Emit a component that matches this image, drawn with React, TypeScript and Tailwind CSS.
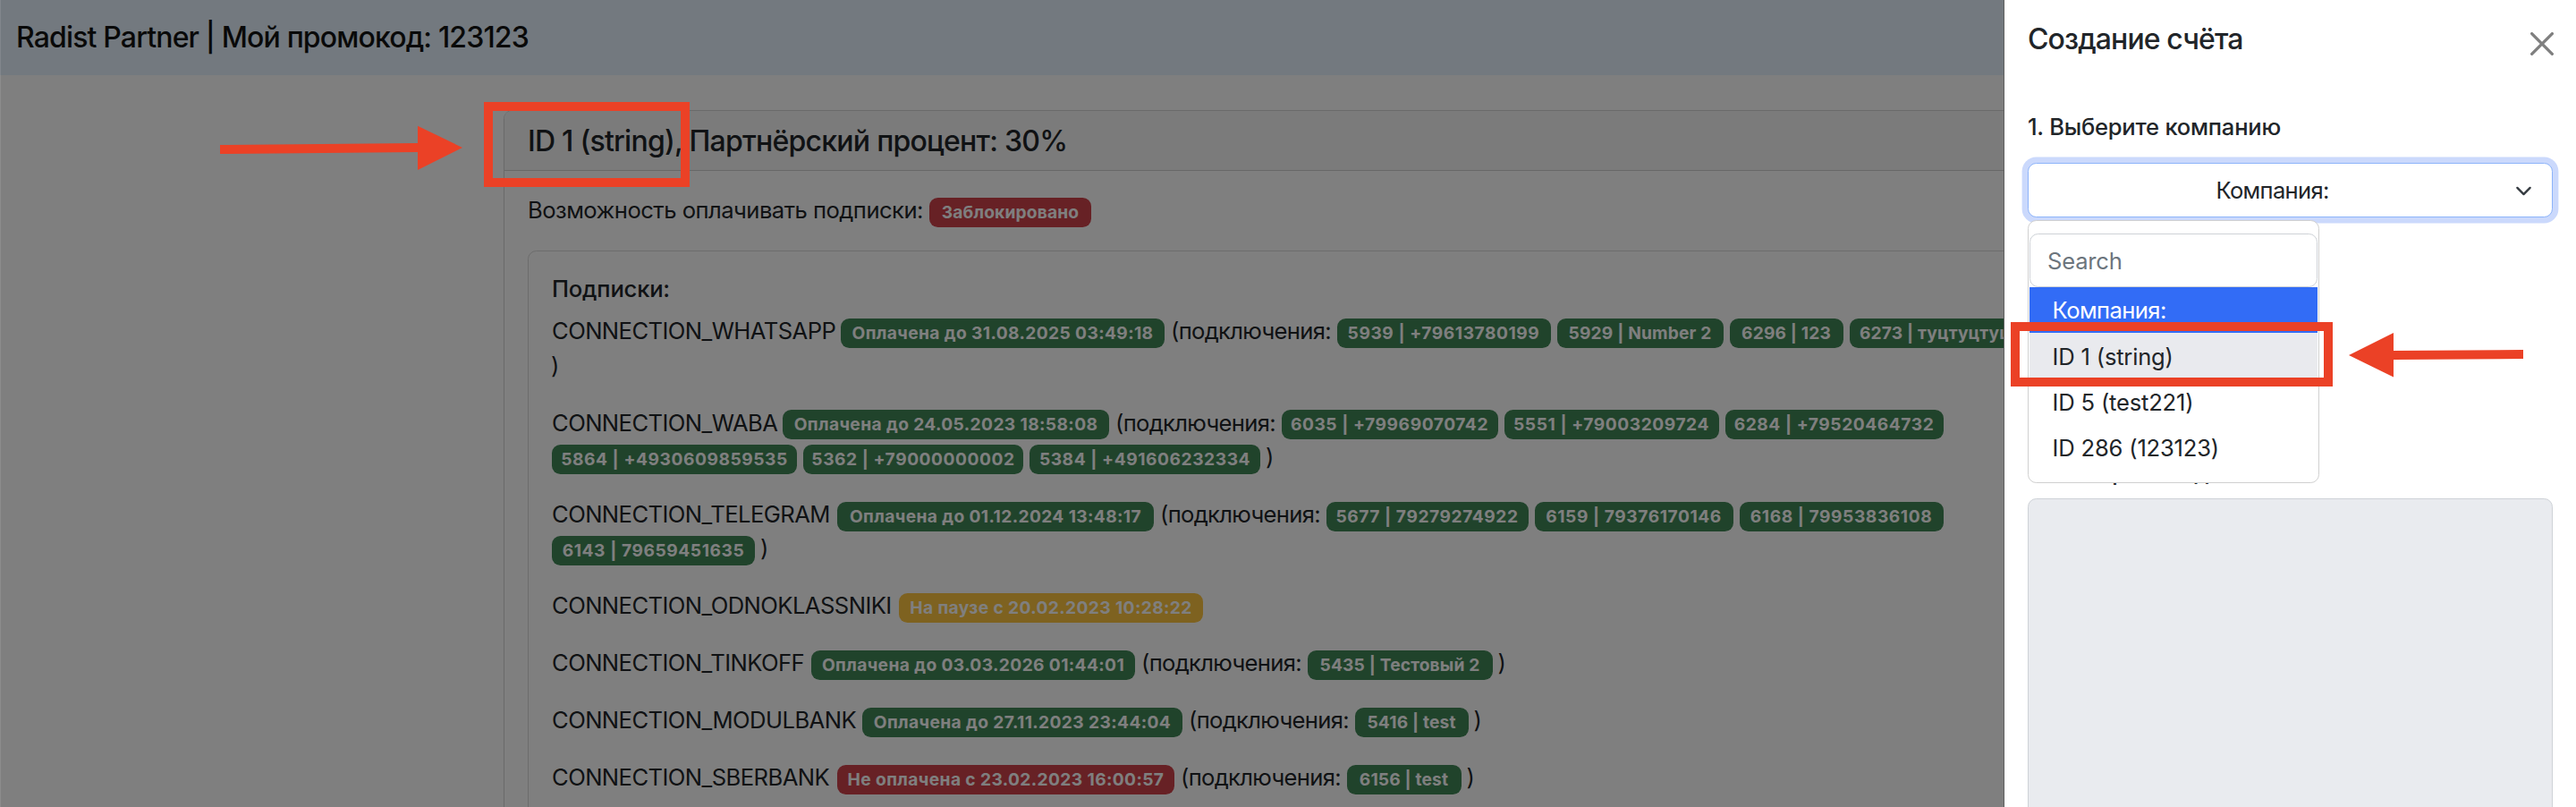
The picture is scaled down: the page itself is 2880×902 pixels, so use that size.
import clsx from "clsx";

type Tone = "success" | "danger" | "warning";

const tones: Record<Tone, string> = {
  success: "bg-[#408656]",
  danger: "bg-[#ce424a]",
  warning: "bg-[#fcc440]",
};

const subscriptions: {
  name: string;
  nameWidth: string;
  tone: Tone;
  status: string;
  statusWidth: string;
  connections: { label: string; width: string }[];
}[] = [
  {
    name: "CONNECTION_WHATSAPP",
    nameWidth: "w-[316px]",
    tone: "success",
    status: "Оплачена до 31.08.2025 03:49:18",
    statusWidth: "w-[362px]",
    connections: [
      { label: "5939 | +79613780199", width: "w-[239px]" },
      { label: "5929 | Number 2", width: "w-[186px]" },
      { label: "6296 | 123", width: "w-[127px]" },
      { label: "6273 | туцтуцтуц", width: "w-[192px]" },
    ],
  },
  {
    name: "CONNECTION_WABA",
    nameWidth: "w-[251px]",
    tone: "success",
    status: "Оплачена до 24.05.2023 18:58:08",
    statusWidth: "w-[365px]",
    connections: [
      { label: "6035 | +79969070742", width: "w-[242px]" },
      { label: "5551 | +79003209724", width: "w-[240px]" },
      { label: "6284 | +79520464732", width: "w-[244px]" },
      { label: "5864 | +4930609859535", width: "w-[274px]" },
      { label: "5362 | +79000000002", width: "w-[246px]" },
      { label: "5384 | +491606232334", width: "w-[258px]" },
    ],
  },
  {
    name: "CONNECTION_TELEGRAM",
    nameWidth: "w-[312px]",
    tone: "success",
    status: "Оплачена до 01.12.2024 13:48:17",
    statusWidth: "w-[354px]",
    connections: [
      { label: "5677 | 79279274922", width: "w-[226px]" },
      { label: "6159 | 79376170146", width: "w-[222px]" },
      { label: "6168 | 79953836108", width: "w-[228px]" },
      { label: "6143 | 79659451635", width: "w-[227px]" },
    ],
  },
  {
    name: "CONNECTION_ODNOKLASSNIKI",
    nameWidth: "w-[381px]",
    tone: "warning",
    status: "На паузе с 20.02.2023 10:28:22",
    statusWidth: "w-[340px]",
    connections: [],
  },
  {
    name: "CONNECTION_TINKOFF",
    nameWidth: "w-[283px]",
    tone: "success",
    status: "Оплачена до 03.03.2026 01:44:01",
    statusWidth: "w-[362px]",
    connections: [{ label: "5435 | Тестовый 2", width: "w-[207px]" }],
  },
  {
    name: "CONNECTION_MODULBANK",
    nameWidth: "w-[340px]",
    tone: "success",
    status: "Оплачена до 27.11.2023 23:44:04",
    statusWidth: "w-[358px]",
    connections: [{ label: "5416 | test", width: "w-[127px]" }],
  },
  {
    name: "CONNECTION_SBERBANK",
    nameWidth: "w-[312px]",
    tone: "danger",
    status: "Не оплачена с 23.02.2023 16:00:57",
    statusWidth: "w-[377px]",
    connections: [{ label: "6156 | test", width: "w-[128px]" }],
  },
];

const companies = ["Компания:", "ID 1 (string)", "ID 5 (test221)", "ID 286 (123123)"];

function Badge({ tone, width, children }: { tone: Tone; width: string; children: string }) {
  // long numbers get a bit more air between digits
  const isPhone = /\| \+?\d{5,}/.test(children);

  return (
    <span
      className={clsx(
        "flex h-[33px] shrink-0 items-center justify-center rounded-[9.6px] text-[19.2px] font-bold leading-none whitespace-nowrap text-white",
        isPhone ? "tracking-[0.55px]" : children.length > 20 ? "tracking-[0.38px]" : "tracking-[0.15px]",
        tones[tone],
        width
      )}
    >
      {children}
    </span>
  );
}

export default function App() {
  return (
    <div className="relative h-[902px] w-[2880px] overflow-hidden bg-white font-['Inter','Liberation_Sans',sans-serif] text-[25.6px] leading-[38.4px] text-[#212529]">
      {/* Navbar */}
      <header className="flex h-[84px] items-center bg-[#e6f2fe] px-[18px] text-[32px] font-medium tracking-[-0.85px] text-[#121212]">
        <span className="whitespace-nowrap">Radist Partner | Мой промокод: 123123</span>
      </header>

      {/* Partner card */}
      <main className="mx-[563px] mt-[39px] h-[900px] rounded-[9.6px] border border-[#d5d5d5]">
        <h5 className="flex h-[67px] items-center rounded-t-[8px] border-b border-[#d0d0d0] bg-[#f7f7f7] px-[26px] pt-[2px] text-[32px] font-medium tracking-[-0.75px]">
          <span className="whitespace-nowrap">ID 1 (string), Партнёрский процент: 30%</span>
        </h5>
        <div className="px-[26px] pt-[26px]">
          <div className="flex h-[38.4px] items-end pb-px">
            <span className="w-[449px] tracking-[-0.52px] whitespace-nowrap">Возможность оплачивать подписки:</span>
            <Badge tone="danger" width="w-[181px]">Заблокировано</Badge>
          </div>

          <div className="mt-[25px] h-[800px] rounded-[9.6px] border border-[#d9d9d9] p-[26px]">
            <h6 className="mb-[13px] pt-px leading-[29.7px] font-medium tracking-[-0.2px]">Подписки:</h6>
            {subscriptions.map((item) => (
              <div key={item.name} className="mb-[25.6px] flex w-[1646px] flex-wrap gap-x-[7px]">
                <span className={clsx("tracking-[-0.56px] whitespace-nowrap", item.nameWidth)}>{item.name}</span>
                <span className="flex h-[38.4px] items-end pb-[0.6px]">
                  <Badge tone={item.tone} width={item.statusWidth}>{item.status}</Badge>
                </span>
                {item.connections.length > 0 && (
                  <>
                    <span className="w-[178.5px] tracking-[-0.68px] whitespace-nowrap">(подключения:</span>
                    {item.connections.map((connection) => (
                      <span key={connection.label} className="flex h-[38.4px] items-end pb-[0.6px]">
                        <Badge tone="success" width={connection.width}>{connection.label}</Badge>
                      </span>
                    ))}
                    <span className="-ml-px">)</span>
                  </>
                )}
              </div>
            ))}
          </div>
        </div>
      </main>

      <div className="absolute inset-0 border-l border-white/10 bg-black/50" />

      {/* Offcanvas */}
      <aside className="absolute inset-y-0 right-0 w-[640px] border-l border-[#5e5e5e] bg-white pr-[26px] pl-[26px]">
        <div className="flex h-[98px] items-start justify-between pt-[24.6px]">
          <h5 className="text-[32px] leading-[38.4px] font-medium tracking-[-0.9px] whitespace-nowrap">Создание счёта</h5>
          <svg viewBox="0 0 16 16" className="mt-[11px] -mr-px size-[26px]" fill="#7f7f7f">
            <path d="M.293.293a1 1 0 0 1 1.414 0L8 6.586 14.293.293a1 1 0 1 1 1.414 1.414L9.414 8l6.293 6.293a1 1 0 0 1-1.414 1.414L8 9.414l-6.293 6.293a1 1 0 0 1-1.414-1.414L6.586 8 .293 1.707a1 1 0 0 1 0-1.414z" />
          </svg>
        </div>
        <h6 className="mt-[29px] mb-[24.6px] leading-[30.7px] font-medium tracking-[-0.25px] whitespace-nowrap">1. Выберите компанию</h6>
        <div className="relative">
          <button className="flex h-[61px] w-[587px] items-center justify-between rounded-[9.6px] border border-[#8db4fa] bg-white pt-px pr-[22px] pl-[19px] shadow-[0_0_0_6.4px_#cbd9fc]">
            <span className="flex-1 pr-[18px] text-center tracking-[-0.7px]">Компания:</span>
            <svg viewBox="0 0 16 16" className="size-[19px]" fill="none" stroke="#343a40" strokeWidth="2" strokeLinecap="round" strokeLinejoin="round">
              <path d="m2 5 6 6 6-6" />
            </svg>
          </button>

          <div className="absolute top-[64px] left-0 z-10 h-[294px] w-[326px] rounded-[9.6px] border border-[#d0d0d0] bg-white px-px pt-[14px]">
            <div className="flex h-[60px] items-center rounded-[9.6px] border border-[#ced2d7] px-[19px] pt-[2px] tracking-[-0.2px] text-[#6c757d]">
              Search
            </div>
            <ul>
              {companies.map((company, index) => (
                <li
                  key={company}
                  className={clsx(
                    "h-[51.2px] px-[25.6px] pt-[7.2px] whitespace-nowrap",
                    index === 0 ? "tracking-[-0.6px]" : "tracking-[-0.2px]",
                    index === 0 && "bg-[#326cf6] text-white",
                    index === 1 && "bg-[#e9eaee]"
                  )}
                >
                  {company}
                </li>
              ))}
            </ul>
          </div>
        </div>

        <h6 className="mt-[270px] leading-[30.7px] font-medium tracking-[-0.3px]">3. Выберите код</h6>
        <div className="mt-[13px] h-[400px] w-[587px] rounded-[9.6px] border border-[#ced2d7] bg-[#e9ebef]" />
      </aside>

      {/* Callouts */}
      <div className="absolute top-[114px] left-[541px] z-20 h-[95px] w-[230px] border-[10px] border-[#eb4126]" />
      <div className="absolute top-[360px] left-[2248px] z-20 h-[72px] w-[360px] border-[10px] border-[#eb4126]" />
      <svg className="absolute top-[140px] left-[246px] h-[50px] w-[272px]" viewBox="0 0 272 50" fill="#eb4126">
        <path d="M0 22 221 20V.7l50 24.3-50 25V30L0 32z" />
      </svg>
      <svg className="absolute top-[372px] left-[2626px] h-[50px] w-[196px]" viewBox="0 0 196 50" fill="#eb4126">
        <path d="M195 19 50 20V0L0 25l50 24.5V30l145-1z" />
      </svg>
    </div>
  );
}
